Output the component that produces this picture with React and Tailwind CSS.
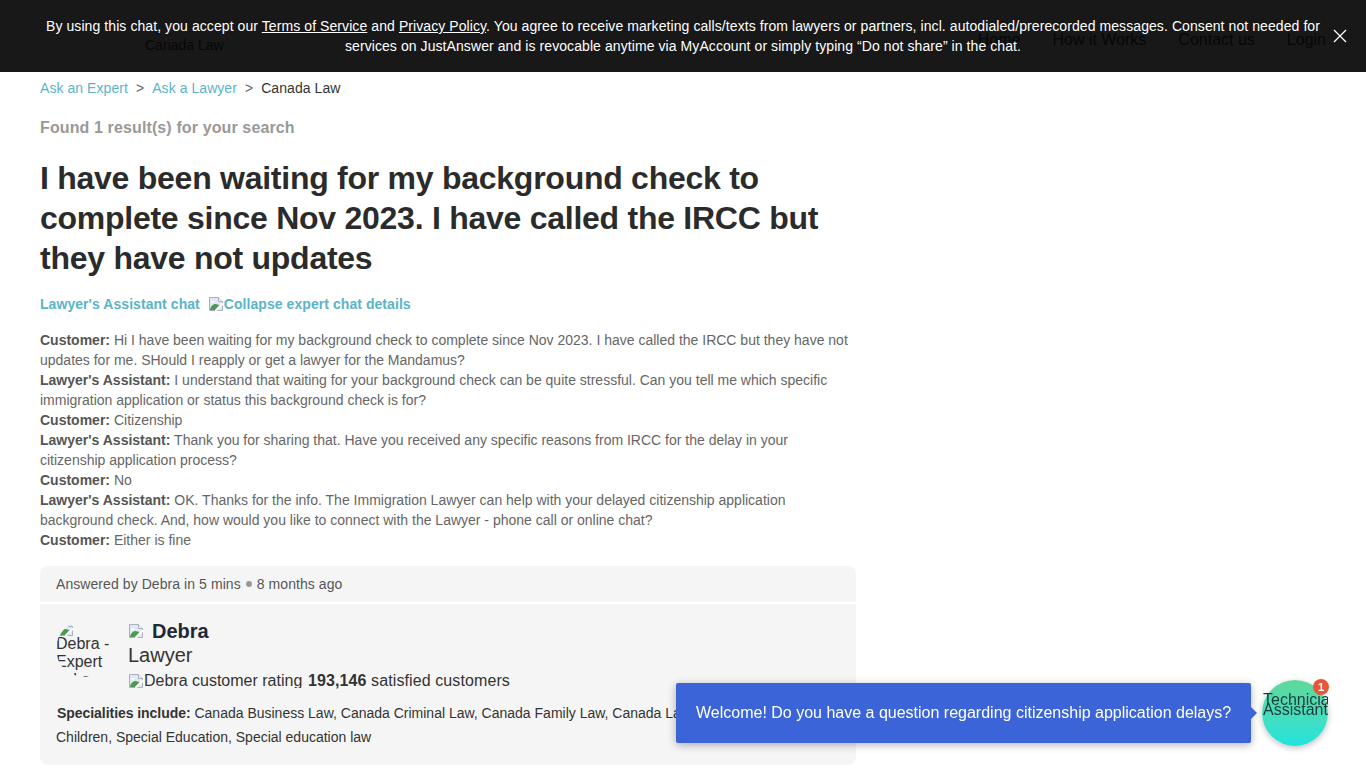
const BrokenImage = () => (
    <svg width="16" height="16" viewBox="0 0 16 16" className="inline-block align-[-2px] shrink-0">
        <path d="M1.5 1.5h9l4 4v9h-13z" fill="#dfe8f7" stroke="#a9b0bb" />
        <path d="M10.5 1.5v4h4" fill="#f4f5f7" stroke="#a9b0bb" />
        <path d="M2 14c.5-3.5 3-6 5.5-6 1.5 0 2.5 1 4 1l-4.5 5z" fill="#4f9a4a" />
        <path d="M3 6.5c0-1.5 2.5-2 4-1-1 1-3 2-4 1z" fill="#fff" />
        <path d="M15 7.5 7.5 15" stroke="#fff" strokeWidth="2" />
    </svg>
);

const CHAT = [
    ['Customer', 'Hi I have been waiting for my background check to complete since Nov 2023. I have called the IRCC but they have not updates for me. SHould I reapply or get a lawyer for the Mandamus?'],
    ["Lawyer's Assistant", 'I understand that waiting for your background check can be quite stressful. Can you tell me which specific immigration application or status this background check is for?'],
    ['Customer', 'Citizenship'],
    ["Lawyer's Assistant", 'Thank you for sharing that. Have you received any specific reasons from IRCC for the delay in your citizenship application process?'],
    ['Customer', 'No'],
    ["Lawyer's Assistant", 'OK. Thanks for the info. The Immigration Lawyer can help with your delayed citizenship application background check. And, how would you like to connect with the Lawyer - phone call or online chat?'],
    ['Customer', 'Either is fine'],
];

export default function App() {
    return (
        <div className="relative min-h-screen bg-white font-['Liberation_Sans',Arial,sans-serif] text-[14px] text-[#333]">
            {/* Header, mostly hidden under the consent bar */}
            <header className="flex h-[72px] items-start justify-between pl-[145px] pr-[40px] pt-[29px] text-[16px] text-[#444]">
                <div className="pt-[7px] text-[14px] leading-[18px]">Canada Law</div>
                <nav className="flex gap-[32px] leading-[22px]">
                    <span>Home</span>
                    <span>How it Works</span>
                    <span>Contact us</span>
                    <span>Login</span>
                </nav>
            </header>

            {/* Consent bar */}
            <div className="absolute inset-x-0 top-0 flex h-[72px] items-start bg-black/[0.906] pl-[40px] pr-[40px] pt-[16px] text-white">
                <p className="w-[1286px] text-center text-[14px] leading-[20px] tracking-[0.08px]">
                    By using this chat, you accept our <span className="underline">Terms of Service</span> and{' '}
                    <span className="underline">Privacy Policy</span>. You agree to receive marketing calls/texts from lawyers or partners, incl. autodialed/prerecorded messages. Consent not needed for services on JustAnswer and is revocable anytime via MyAccount or simply typing “Do not share” in the chat.
                </p>
                <svg width="14" height="14" viewBox="0 0 14 14" className="absolute left-[1333px] top-[29px]">
                    <path d="M1 1l12 12M13 1 1 13" stroke="#fff" strokeWidth="1.3" />
                </svg>
            </div>

            <main className="w-[816px] ml-[40px]">
                {/* Breadcrumbs */}
                <div className="flex h-[32px] items-center text-[14px] tracking-[0.06px]">
                    <span className="text-[#5ab4c9]">Ask an Expert</span>
                    <span className="px-[8px] text-[#666]">&gt;</span>
                    <span className="text-[#5ab4c9]">Ask a Lawyer</span>
                    <span className="px-[8px] text-[#666]">&gt;</span>
                    <span>Canada Law</span>
                </div>

                <div className="mt-[14px] text-[16px] font-bold leading-[20px] tracking-[0.12px] text-[#999]">Found 1 result(s) for your search</div>

                <h1 className="mt-[20px] text-[32px] font-bold leading-[40px] tracking-[-0.26px] text-[#2b2b2b]">
                    I have been waiting for my background check to complete since Nov 2023. I have called the IRCC but they have not updates
                </h1>

                <div className="mt-[16px] flex items-center text-[14px] font-bold leading-[20px] tracking-[0.06px] text-[#5ab4c9]">
                    <span>Lawyer's Assistant chat</span>
                    <span className="ml-[8px] flex items-center">
                        <BrokenImage />
                        Collapse expert chat details
                    </span>
                </div>

                {/* Chat transcript */}
                <div className="mt-[16px] text-[14px] leading-[20px] text-[#666]">
                    {CHAT.map(([who, text], index) => (
                        <div key={index}>
                            <b className="text-[#555]">{who}:</b> {text}
                        </div>
                    ))}
                </div>

                {/* Expert card */}
                <div className="mt-[16px] rounded-[8px] bg-[#f5f5f5]">
                    <div className="flex h-[38px] items-center border-b-2 border-white px-[16px] text-[14px] tracking-[0.07px] text-[#555]">
                        Answered by Debra in 5 mins
                        <span className="mx-[5px] h-[6px] w-[6px] rounded-full bg-[#999]"></span>
                        8 months ago
                    </div>
                    <div className="px-[16px] pb-[16px] pt-[17px]">
                        <div className="flex">
                            <div className="h-[56px] w-[56px] shrink-0 overflow-hidden rounded-full text-[16px] leading-[18px] text-[#333]">
                                <div className="h-[14px] pl-[2px]"><BrokenImage /></div>
                                Debra - Expert in Law
                            </div>
                            <div className="ml-[16px]">
                                <div className="flex h-[20px] items-center text-[20px] font-bold text-[#1f2937]">
                                    <BrokenImage />
                                    <span className="ml-[8px]">Debra</span>
                                </div>
                                <div className="mt-[1px] text-[20px] leading-[26px] text-[#333]">Lawyer</div>
                                <div className="mt-[5px] flex h-[20px] text-[16px] text-[#333]">
                                    <span className="flex h-[15px] w-[175px] items-start overflow-hidden whitespace-nowrap leading-[15px]">
                                        <BrokenImage />
                                        Debra customer rating
                                    </span>
                                    <span className="ml-[5px] leading-[16px] tracking-[0.1px]"><b>193,146</b> satisfied customers</span>
                                </div>
                            </div>
                        </div>
                        <p className="mt-[8px] text-[14px] leading-[24px] text-[#333]">
                            <b className="ml-px tracking-[-0.05px]">Specialities include:</b> Canada Business Law, Canada Criminal Law, Canada Family Law, Canada Law, Canada Immigration, Children, Special Education, Special education law
                        </p>
                    </div>
                </div>
            </main>

            {/* Chat prompt */}
            <div className="fixed left-[676px] top-[683px] flex h-[60px] w-[575px] items-center rounded-[2px] bg-[#3b64d8] pl-[20px] text-[16px] text-white shadow-[0_2px_8px_rgba(0,0,0,0.3)]">
                Welcome! Do you have a question regarding citizenship application delays?
                <span className="absolute left-full top-[24px] h-0 w-0 border-y-[6px] border-l-[6px] border-y-transparent border-l-[#3b64d8]"></span>
            </div>

            {/* Assistant bubble */}
            <div className="fixed left-[1262px] top-[680px] h-[66px] w-[66px] rounded-full bg-gradient-to-b from-[#5fd89a] to-[#1ee3dc] shadow-[0_2px_6px_rgba(0,0,0,0.25)]">
                <div className="h-full w-full overflow-hidden pl-[1px] pt-[15px] text-left text-[16px] leading-[10px] text-[#1c3b3a]">
                    Technician Assistant
                </div>
                <span className="absolute left-[51px] top-[-1px] flex h-[16px] w-[16px] items-center justify-center rounded-full bg-[#e8563a] text-[11px] font-bold text-white">1</span>
            </div>
        </div>
    );
}
